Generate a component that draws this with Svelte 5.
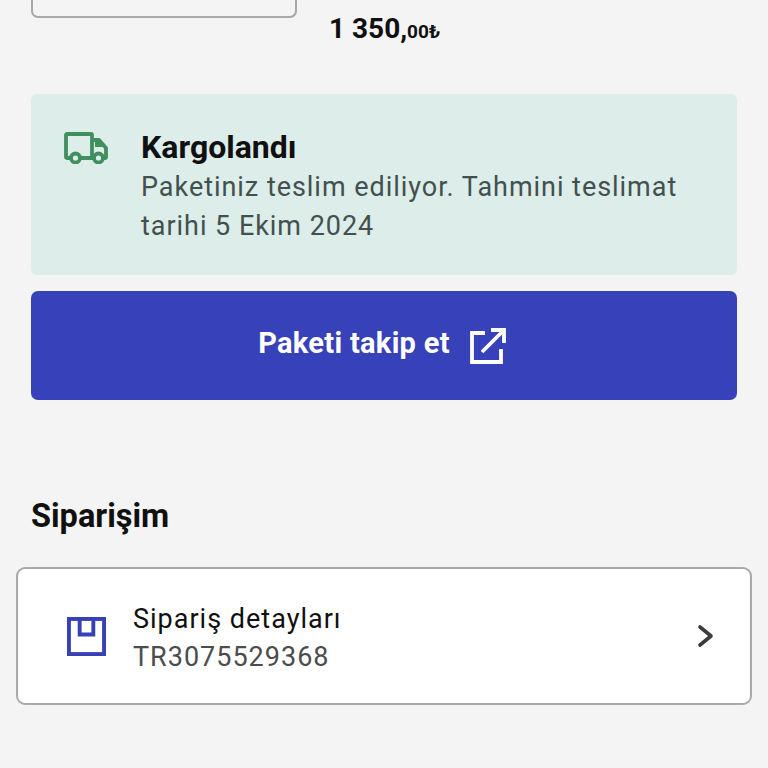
<script>
  let order = { price: "1 350,", cents: "00₺", code: "TR3075529368" };
</script>

<div class="page">
  <div class="top">
    <div class="product-box"></div>
    <div class="price">{order.price}<span class="cents">{order.cents}</span></div>
  </div>

  <div class="status">
    <svg class="truck" viewBox="0 0 44 32" fill="none" stroke="#3f8f5f" stroke-width="3.8" stroke-linejoin="round">
      <path d="M7 26 H3 Q2 26 2 25 V3 Q2 2 3 2 H27 Q28 2 28 3 V26 H16" />
      <path d="M28 8 H35 L42 16 V25 Q42 26 41 26 H39" />
      <path d="M28 26 H30" />
      <path d="M31 10 H35 L39 15 H31 Z" fill="#3f8f5f" stroke="none" />
      <circle cx="11.5" cy="26" r="4.5" />
      <circle cx="34.5" cy="26" r="4.5" />
    </svg>
    <div class="status-text">
      <div class="status-title">Kargolandı</div>
      <div class="status-desc">Paketiniz teslim ediliyor. Tahmini teslimat tarihi 5 Ekim 2024</div>
    </div>
  </div>

  <div class="track">
    <span>Paketi takip et</span>
    <svg viewBox="0 0 36 36" fill="none" stroke="#fff" stroke-width="3.8">
      <path d="M15 5 H2 V34 H31 V21" />
      <path d="M12 24 L33 3" />
      <path d="M21 2 H34 V15" />
    </svg>
  </div>

  <h2>Siparişim</h2>

  <div class="card">
    <svg class="box" viewBox="0 0 40 40" fill="none" stroke="#3741b5" stroke-width="4">
      <rect x="2" y="2" width="36" height="36" />
      <path d="M13 2 V18 H27 V2" />
    </svg>
    <div class="card-text">
      <div class="card-title">Sipariş detayları</div>
      <div class="card-code">{order.code}</div>
    </div>
    <svg class="chevron" viewBox="0 0 18 24" fill="none" stroke="#3c3c3c" stroke-width="3.6" stroke-linecap="round" stroke-linejoin="round">
      <path d="M3 3 L14 12 L3 21" />
    </svg>
  </div>
</div>

<style>
  :global(body) {
    margin: 0;
    background: #f4f4f4;
  }

  .page {
    height: 768px;
    overflow: hidden;
    box-sizing: border-box;
    padding: 0 31px;
    font-family: Roboto, "Noto Sans", sans-serif;
    color: #101010;
  }

  .top {
    display: flex;
    height: 94px;
  }

  .product-box {
    box-sizing: border-box;
    width: 266px;
    height: 18px;
    border: 2px solid #a8a8a8;
    border-top: none;
    border-radius: 0 0 7px 7px;
  }

  .price {
    margin: 11px 0 0 32px;
    font-size: 28px;
    line-height: 36px;
    font-weight: 700;
  }

  .cents {
    font-size: 19px;
  }

  .status {
    display: flex;
    box-sizing: border-box;
    height: 181px;
    padding: 35px 33px 0;
    background: #dcedea;
    border-radius: 6px;
  }

  .truck {
    flex: none;
    width: 44px;
    height: 32px;
    margin-top: 3px;
  }

  .status-text {
    margin-left: 33px;
  }

  .status-title {
    font-size: 32px;
    line-height: 36px;
    font-weight: 700;
  }

  .status-desc {
    margin-top: 3px;
    font-size: 27px;
    line-height: 39px;
    letter-spacing: 0.96px;
    color: #43504e;
  }

  .track {
    display: flex;
    align-items: center;
    justify-content: center;
    gap: 20px;
    height: 109px;
    margin-top: 16px;
    padding: 0 4px 5px 0;
    box-sizing: border-box;
    background: #3741b9;
    border-radius: 7px;
    color: #fff;
    font-size: 29px;
    font-weight: 700;
    letter-spacing: 0.3px;
  }

  .track svg {
    width: 36px;
    height: 36px;
    margin-top: 5px;
  }

  h2 {
    margin: 96px 0 0;
    font-size: 32.5px;
    line-height: 40px;
    font-weight: 700;
  }

  .card {
    display: flex;
    align-items: center;
    box-sizing: border-box;
    height: 138px;
    margin: 31px -15px 0;
    padding: 0 35px 0 49px;
    background: #fff;
    border: 2px solid #aaa;
    border-radius: 9px;
  }

  .box {
    flex: none;
    width: 39px;
    height: 39px;
  }

  .card-text {
    flex: 1;
    margin-left: 27px;
    padding-top: 3px;
    font-size: 27px;
    line-height: 38px;
    letter-spacing: 1px;
  }

  .card-code {
    color: #4c4c4c;
  }

  .chevron {
    flex: none;
    width: 18px;
    height: 24px;
  }
</style>
